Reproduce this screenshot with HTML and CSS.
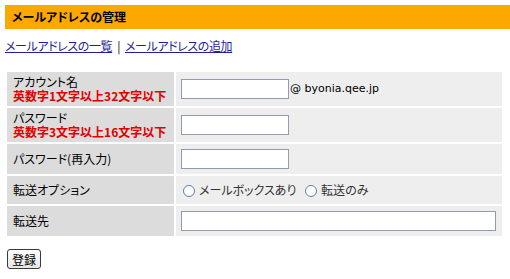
FILE: index.html
```html
<!DOCTYPE html>
<html lang="ja">
<head>
  <meta charset="UTF-8" />
  <title>メールアドレスの管理</title>
  <link rel="stylesheet" href="styles.css">
</head>
<body>
  <h1 class="page-title">メールアドレスの管理</h1>
  <p class="sub-nav">
    <a href="#">メールアドレスの一覧</a><span class="sep">|</span><a href="#">メールアドレスの追加</a>
  </p>
  <form>
    <table class="form-table">
      <tr>
        <th>アカウント名<br><span class="note">英数字1文字以上32文字以下</span></th>
        <td><input type="text" class="short"><span class="domain">@ byonia.qee.jp</span></td>
      </tr>
      <tr>
        <th>パスワード<br><span class="note">英数字3文字以上16文字以下</span></th>
        <td><input type="password" class="short"></td>
      </tr>
      <tr>
        <th>パスワード(再入力)</th>
        <td><input type="password" class="short"></td>
      </tr>
      <tr class="radio-row">
        <th>転送オプション</th>
        <td>
          <label><input type="radio" name="fwd">メールボックスあり</label>
          <label><input type="radio" name="fwd">転送のみ</label>
        </td>
      </tr>
      <tr>
        <th>転送先</th>
        <td><input type="text" class="long"></td>
      </tr>
    </table>
    <button type="button" class="submit">登録</button>
  </form>
</body>
</html>
```

FILE: styles.css
```css
* { box-sizing: border-box; }
body {
  margin: 5px 0 0 5px;
  font-family: "Noto Sans CJK JP", "DejaVu Sans", sans-serif;
  font-size: 12px;
  color: #000;
  background: #fff;
  font-feature-settings: "palt";
}
.page-title {
  margin: 0;
  height: 24px;
  line-height: 24px;
  padding-left: 7px;
  font-size: 12px;
  font-weight: bold;
  background-color: #fca800;
}
.sub-nav {
  margin: 0;
  padding-top: 9px;
  height: 41px;
  line-height: 16px;
  letter-spacing: -0.4px;
}
.sub-nav a { color: #1f1f9a; }
.sep { margin: 0 5px; }
.form-table {
  width: 499px;
  border-collapse: separate;
  border-spacing: 2px;
}
.form-table th {
  width: 167px;
  text-align: left;
  font-weight: normal;
  line-height: 14px;
  padding: 3px 6px;
  background-color: #dcdcdc;
}
.form-table td {
  padding: 5px 5px;
  line-height: 14px;
  background-color: #eeeeee;
}
.note {
  color: #e00000;
  font-weight: bold;
}
input[type="text"], input[type="password"] {
  height: 20px;
  border: 1px solid #8f9bb0;
  background: #fff;
  vertical-align: middle;
  margin: 0;
}
.short { width: 108px; }
.long { width: 315px; }
.domain {
  font-family: "DejaVu Sans", sans-serif;
  font-size: 11px;
  margin-left: 1px;
  vertical-align: middle;
}
.radio-row th, .radio-row td { height: 28px; }
.radio-row label {
  color: #333;
  margin-right: 4px;
}
input[type="radio"] {
  appearance: none;
  width: 12px;
  height: 12px;
  margin: 0 4px 0 2px;
  border: 1px solid #5b7fae;
  border-radius: 50%;
  background: #fff;
  vertical-align: -2px;
}
.submit {
  margin: 11px 0 0 2px;
  width: 34px;
  height: 20px;
  padding: 0;
  font-family: inherit;
  font-size: 12px;
  border: 1px solid #3a3a3a;
  border-radius: 3px;
  background: linear-gradient(#fcfcfc, #e6e6e3);
}
```
